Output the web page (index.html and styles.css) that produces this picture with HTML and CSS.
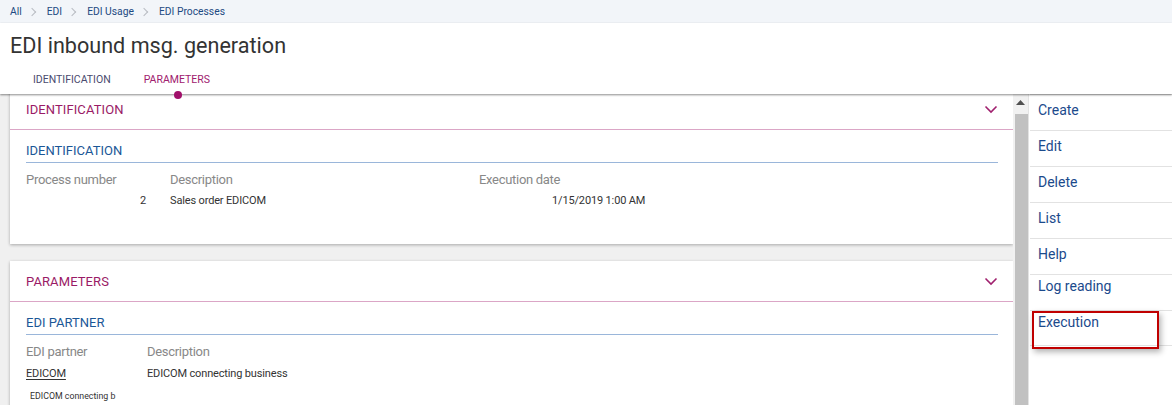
FILE: index.html
```html
<!DOCTYPE html>
<html>
<head>
<meta charset="utf-8">
<link rel="stylesheet" href="styles.css">
</head>
<body>
<div class="page">
  <div class="breadcrumb">
    <span class="crumb">All</span><span class="sep"></span>
    <span class="crumb">EDI</span><span class="sep"></span>
    <span class="crumb">EDI Usage</span><span class="sep"></span>
    <span class="crumb">EDI Processes</span>
  </div>
  <div class="header">
    <h1 class="title">EDI inbound msg. generation</h1>
    <div class="tabs">
      <span class="tab">IDENTIFICATION</span>
      <span class="tab active">PARAMETERS</span>
    </div>
  </div>
  <div class="main">
    <div class="content">
      <div class="scroller">
        <div class="card">
          <div class="card-head">
            <span class="card-title">IDENTIFICATION</span>
            <svg class="chev" width="14" height="9" viewBox="0 0 14 9"><polyline points="1.5,1.5 7,7 12.5,1.5" fill="none" stroke="#a0206e" stroke-width="1.6"/></svg>
          </div>
          <div class="section">
            <div class="sec-title">IDENTIFICATION</div>
            <div class="grid g1">
              <div class="label">Process number</div>
              <div class="label">Description</div>
              <div class="label">Execution date</div>
              <div class="value num">2</div>
              <div class="value">Sales order EDICOM</div>
              <div class="value date">1/15/2019 1:00 AM</div>
            </div>
          </div>
        </div>
        <div class="card card2">
          <div class="card-head">
            <span class="card-title">PARAMETERS</span>
            <svg class="chev" width="14" height="9" viewBox="0 0 14 9"><polyline points="1.5,1.5 7,7 12.5,1.5" fill="none" stroke="#a0206e" stroke-width="1.6"/></svg>
          </div>
          <div class="section">
            <div class="sec-title">EDI PARTNER</div>
            <div class="grid g2">
              <div class="label">EDI partner</div>
              <div class="label">Description</div>
              <div class="value link">EDICOM</div>
              <div class="value">EDICOM connecting business</div>
            </div>
            <div class="small">EDICOM connecting b</div>
          </div>
        </div>
      </div>
    </div>
    <div class="scrollbar">
      <div class="arrow"><svg width="9" height="5" viewBox="0 0 9 5"><polygon points="0,5 4.5,0 9,5" fill="#505050"/></svg></div>
      <div class="thumb"></div>
    </div>
    <div class="side">
      <div class="item">Create</div>
      <div class="item">Edit</div>
      <div class="item">Delete</div>
      <div class="item">List</div>
      <div class="item">Help</div>
      <div class="item up">Log reading</div>
      <div class="item up hl">Execution<span class="mark"></span></div>
    </div>
  </div>
</div>
</body>
</html>
```
FILE: styles.css
```css
* { box-sizing: border-box; }
html, body { margin: 0; padding: 0; }
body {
  font-family: Roboto, "Noto Sans", "Liberation Sans", sans-serif;
  background: #fff;
  width: 1172px;
  height: 405px;
  overflow: hidden;
}
.page { display: flex; flex-direction: column; height: 405px; }

.breadcrumb {
  height: 23px;
  background: #f2f5f9;
  display: flex;
  align-items: center;
  padding-left: 10px;
  font-size: 10.3px;
  color: #1d4a82;
}
.crumb { line-height: 14px; }
.sep {
  width: 6px; height: 6px;
  border-top: 1px solid #b8bcc2;
  border-right: 1px solid #b8bcc2;
  transform: rotate(45deg);
  margin: 0 12px 0 7px;
}

.header {
  position: relative;
  z-index: 2;
  background: #fff;
  padding: 8px 0 6px 0;
  box-shadow: 0 1px 2px rgba(0,0,0,0.45);
}
.title {
  margin: 0 0 0 10px;
  font-size: 21.6px;
  font-weight: 400;
  line-height: 30px;
  color: #333;
}
.tabs {
  display: flex;
  gap: 33px;
  margin-top: 11px;
  padding-left: 33px;
  font-size: 10.5px;
  line-height: 16px;
}
.tab { color: #4a4a6e; position: relative; }
.tab.active { color: #a0206e; }
.tab.active::after {
  content: "";
  position: absolute;
  left: 50%;
  bottom: -11px;
  width: 8px; height: 8px;
  margin-left: -3px;
  border-radius: 50%;
  background: #a0106a;
}

.main { flex: 1; display: flex; min-height: 0; }
.content {
  width: 1013px;
  background: #f0f0f0;
  overflow: hidden;
  padding-left: 10px;
}
.scroller { margin-top: -5px; }
.card {
  background: #fff;
  box-shadow: 0 1px 3px rgba(0,0,0,0.3);
  padding-bottom: 35px;
}
.card2 { margin-top: 17px; }
.card-head {
  height: 41px;
  border-bottom: 1px solid #dba6c6;
  display: flex;
  align-items: center;
  justify-content: space-between;
  padding: 0 15px 0 16px;
}
.card-title { color: #9a1a66; font-size: 13px; letter-spacing: 0.1px; }
.chev { margin-top: 1px; }
.section { padding: 0 15px 0 16px; }
.sec-title {
  color: #1b5797;
  font-size: 13px;
  line-height: 18px;
  padding-top: 12px;
  padding-bottom: 2px;
  border-bottom: 1px solid #9ab6da;
}
.grid { display: grid; row-gap: 5px; margin-top: 9px; }
.g1 { grid-template-columns: 144px 309px 240px; }
.g2 { grid-template-columns: 121px 300px; row-gap: 6px; }
.label { color: #888; font-size: 13px; line-height: 16px; letter-spacing: -0.3px; }
.value { color: #333; font-size: 11px; line-height: 16px; letter-spacing: -0.15px; }
.num { text-align: right; padding-right: 24px; }
.date { padding-left: 73px; }
.link { text-decoration: underline; text-underline-offset: 2px; }
.small { font-size: 8.8px; color: #333; margin: 9px 0 0 4px; }

.scrollbar {
  width: 16px;
  background: #f1f1f1;
  display: flex;
  flex-direction: column;
  align-items: center;
  border-right: 1px solid #e3e3e3;
}
.arrow { height: 17px; display: flex; align-items: center; justify-content: center; }
.thumb { width: 13px; flex: 1; background: #c1c1c1; margin-top: 3px; margin-left: 1px; }

.side { flex: 1; background: #fff; padding-left: 1px; }
.item {
  height: 36px;
  border-top: 1px solid #e2e2e2;
  padding: 5px 0 0 8px;
  font-size: 14px;
  line-height: 20px;
  color: #1b4a8c;
  position: relative;
}
.item:last-child { border-bottom: 1px solid #e2e2e2; }
.item.up { padding-top: 1px; }
.mark {
  position: absolute;
  left: 2px;
  top: 0;
  width: 127px;
  height: 38px;
  border: 2px solid #c00000;
  box-shadow: 2px 3px 6px rgba(0,0,0,0.3);
}
```
